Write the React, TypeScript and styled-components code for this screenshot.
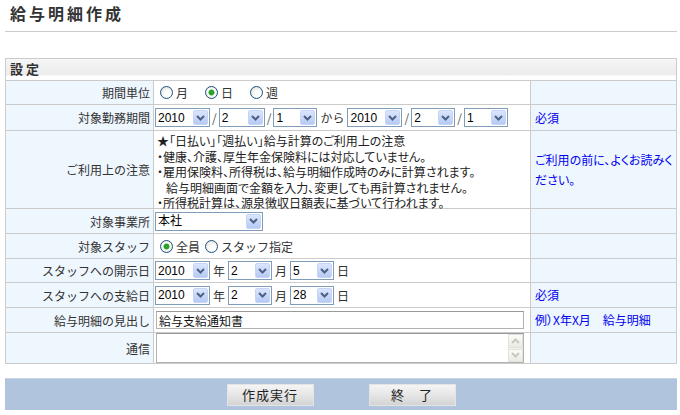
import React from 'react';
import styled, { createGlobalStyle } from 'styled-components';

const GlobalStyle = createGlobalStyle`
  body {
    margin: 0;
    background: #fff;
    font-family: "Noto Sans CJK JP", "Liberation Sans", sans-serif;
    font-size: 12px;
    color: #333;
  }
`;

const Page = styled.div`
  padding: 0 3px 0 5px;
`;

const Title = styled.h1`
  margin: 0 0 26px;
  height: 32px;
  box-sizing: border-box;
  padding: 2px 0 0 5px;
  border-bottom: 1px solid #ccc;
  font-size: 16px;
  line-height: 22px;
  font-weight: bold;
  letter-spacing: 3px;
  color: #333;
`;

const FormGrid = styled.div`
  display: grid;
  grid-template-columns: 147px 376px 145px;
  grid-template-rows: 21px 23px 25px 77px 24px 24px 23px 24px 24px 30px;
  gap: 1px;
  padding: 1px;
  width: 672px;
  box-sizing: border-box;
  background: #cbcbcb;
`;

const SectionHead = styled.div`
  grid-column: 1 / -1;
  display: flex;
  align-items: center;
  padding: 0 0 3px 4px;
  background: linear-gradient(#f6f6f6, #ececec 75%, #fff 82%);
  font-size: 13px;
  font-weight: bold;
  letter-spacing: 3px;
  color: #333;
`;

const Label = styled.div`
  display: flex;
  align-items: center;
  justify-content: flex-end;
  padding-right: 3px;
  background: #eef6fe;
  white-space: nowrap;
`;

const Field = styled.div<{ $top?: boolean }>`
  display: flex;
  align-items: ${(p) => (p.$top ? 'flex-start' : 'center')};
  padding-left: 1px;
  background: #fff;
  white-space: nowrap;
`;

const Note = styled.div`
  display: flex;
  align-items: center;
  padding-left: 4px;
  background: #eef6fe;
  color: #0000ee;
  line-height: 20px;
  white-space: nowrap;
  font-feature-settings: "palt";
`;

const SelectBox = styled.span<{ $w: number }>`
  position: relative;
  display: inline-flex;
  width: ${(p) => p.$w}px;
  height: 19px;
  box-sizing: border-box;
  border: 1px solid #7f9db9;
  background: #fff;
`;

const NativeSelect = styled.select`
  appearance: none;
  border: 0;
  outline: 0;
  background: transparent;
  font: inherit;
  font-family: "Liberation Sans", "Noto Sans CJK JP", sans-serif;
  font-size: 12px;
  color: #000;
  padding: 0 0 0 2px;
  margin: 0;
  width: 100%;
  height: 100%;
`;

const Arrow = styled.span`
  position: absolute;
  top: 1px;
  right: 1px;
  bottom: 1px;
  width: 15px;
  box-sizing: border-box;
  display: flex;
  align-items: center;
  justify-content: center;
  border: 1px solid #c6d5f7;
  border-radius: 2px;
  background: linear-gradient(#dbe6fd, #b6caf4);
  pointer-events: none;
`;

const Sep = styled.span`
  margin: 0 2px;
  color: #555;
`;

const Unit = styled.span`
  margin: 0 3px;
`;

const RadioGroup = styled.div<{ $gap: number }>`
  display: flex;
  align-items: center;
  gap: ${(p) => p.$gap}px;
  padding-left: 5px;
`;

const RadioLabel = styled.label`
  display: inline-flex;
  align-items: center;
  gap: 3px;
`;

const Radio = styled.input.attrs({ type: 'radio' })`
  appearance: none;
  margin: 0;
  width: 13px;
  height: 13px;
  border-radius: 50%;
  border: 1px solid #1c5180;
  background: radial-gradient(circle at 60% 65%, #fff 30%, #dcdcd6 90%);
  &:checked {
    background: radial-gradient(circle, #2ca02c 0 2.5px, #9ad48f 3px, #fff 3.5px, #dcdcd6 90%);
  }
`;

const NotesBox = styled.div`
  padding: 2px 0 0 2px;
  line-height: 15.6px;
  color: #222;
  font-feature-settings: "palt";
`;

const Indent = styled.div`
  padding-left: 9px;
`;

const TextInput = styled.input`
  width: 368px;
  height: 18px;
  box-sizing: border-box;
  margin-left: 1px;
  border: 1px solid #b2b2b2;
  border-top-color: #999;
  padding: 0 2px;
  font: inherit;
  color: #111;
`;

const AreaBox = styled.div`
  display: flex;
  width: 368px;
  height: 30px;
  box-sizing: border-box;
  margin-left: 1px;
  border: 1px solid #b2b2b2;
  border-top-color: #999;
`;

const TextArea = styled.textarea`
  flex: 1;
  border: 0;
  outline: 0;
  resize: none;
  overflow: hidden;
  font: inherit;
  padding: 1px 2px;
`;

const ScrollBar = styled.div`
  width: 15px;
  display: flex;
  flex-direction: column;
  gap: 1px;
  background: #f3f3ee;
`;

const ScrollBtn = styled.span`
  flex: 1;
  display: flex;
  align-items: center;
  justify-content: center;
  border: 1px solid #e2e2dc;
  background: linear-gradient(#fbfbf8, #ebebe4);
`;

const Footer = styled.div`
  margin-top: 14px;
  width: 672px;
  height: 32px;
  box-sizing: border-box;
  display: flex;
  justify-content: center;
  align-items: center;
  gap: 55px;
  background: #b0c4de;
  border-top: 1px solid #c7d4e6;
`;

const Button = styled.button`
  width: 87px;
  height: 22px;
  padding: 0;
  border: 1px solid #e4e4e4;
  background: linear-gradient(#f5f5f5, #e6e6e6 50%, #d3d3d3);
  font: inherit;
  font-size: 13px;
  color: #222;
  letter-spacing: 1px;
`;

const Chevron = ({ color = '#4d6185', up = false }: { color?: string; up?: boolean }) => (
  <svg width="9" height="6" viewBox="0 0 9 6">
    <polyline
      points={up ? '1,5 4.5,1.5 8,5' : '1,1 4.5,4.5 8,1'}
      fill="none"
      stroke={color}
      strokeWidth="2"
    />
  </svg>
);

const Select = ({ w, value, options }: { w: number; value: string; options: string[] }) => (
  <SelectBox $w={w}>
    <NativeSelect defaultValue={value}>
      {options.map((o) => (
        <option key={o} value={o}>
          {o}
        </option>
      ))}
    </NativeSelect>
    <Arrow>
      <Chevron />
    </Arrow>
  </SelectBox>
);

const years = ['2009', '2010', '2011'];
const months = Array.from({ length: 12 }, (_, i) => String(i + 1));
const days = Array.from({ length: 31 }, (_, i) => String(i + 1));

const App = () => {
  return (
    <Page>
      <GlobalStyle />
      <Title>給与明細作成</Title>
      <FormGrid>
        <SectionHead>設定</SectionHead>

        <Label>期間単位</Label>
        <Field>
          <RadioGroup $gap={17}>
            <RadioLabel>
              <Radio name="unit" />月
            </RadioLabel>
            <RadioLabel>
              <Radio name="unit" defaultChecked />日
            </RadioLabel>
            <RadioLabel>
              <Radio name="unit" />週
            </RadioLabel>
          </RadioGroup>
        </Field>
        <Note />

        <Label>対象勤務期間</Label>
        <Field>
          <Select w={55} value="2010" options={years} />
          <Sep>/</Sep>
          <Select w={46} value="2" options={months} />
          <Sep>/</Sep>
          <Select w={44} value="1" options={days} />
          <Unit>から</Unit>
          <Select w={55} value="2010" options={years} />
          <Sep>/</Sep>
          <Select w={44} value="2" options={months} />
          <Sep>/</Sep>
          <Select w={44} value="1" options={days} />
        </Field>
        <Note>必須</Note>

        <Label>ご利用上の注意</Label>
        <Field $top>
          <NotesBox>
            <div>★「日払い」「週払い」給与計算のご利用上の注意</div>
            <div>・健康、介護、厚生年金保険料には対応していません。</div>
            <div>・雇用保険料、所得税は、給与明細作成時のみに計算されます。</div>
            <Indent>給与明細画面で金額を入力、変更しても再計算されません。</Indent>
            <div>・所得税計算は、源泉徴収日額表に基づいて行われます。</div>
          </NotesBox>
        </Field>
        <Note>
          ご利用の前に、よくお読みく
          <br />
          ださい。
        </Note>

        <Label>対象事業所</Label>
        <Field>
          <Select w={108} value="本社" options={['本社', '支社']} />
        </Field>
        <Note />

        <Label>対象スタッフ</Label>
        <Field>
          <RadioGroup $gap={5}>
            <RadioLabel>
              <Radio name="staff" defaultChecked />全員
            </RadioLabel>
            <RadioLabel>
              <Radio name="staff" />スタッフ指定
            </RadioLabel>
          </RadioGroup>
        </Field>
        <Note />

        <Label>スタッフへの開示日</Label>
        <Field>
          <Select w={55} value="2010" options={years} />
          <Unit>年</Unit>
          <Select w={44} value="2" options={months} />
          <Unit>月</Unit>
          <Select w={44} value="5" options={days} />
          <Unit>日</Unit>
        </Field>
        <Note />

        <Label>スタッフへの支給日</Label>
        <Field>
          <Select w={55} value="2010" options={years} />
          <Unit>年</Unit>
          <Select w={44} value="2" options={months} />
          <Unit>月</Unit>
          <Select w={44} value="28" options={days} />
          <Unit>日</Unit>
        </Field>
        <Note>必須</Note>

        <Label>給与明細の見出し</Label>
        <Field>
          <TextInput defaultValue="給与支給通知書" />
        </Field>
        <Note>例）X年X月　給与明細</Note>

        <Label>通信</Label>
        <Field>
          <AreaBox>
            <TextArea />
            <ScrollBar>
              <ScrollBtn>
                <Chevron up color="#c9c9c0" />
              </ScrollBtn>
              <ScrollBtn>
                <Chevron color="#c9c9c0" />
              </ScrollBtn>
            </ScrollBar>
          </AreaBox>
        </Field>
        <Note />
      </FormGrid>
      <Footer>
        <Button>作成実行</Button>
        <Button>終　了</Button>
      </Footer>
    </Page>
  );
};

export default App;
